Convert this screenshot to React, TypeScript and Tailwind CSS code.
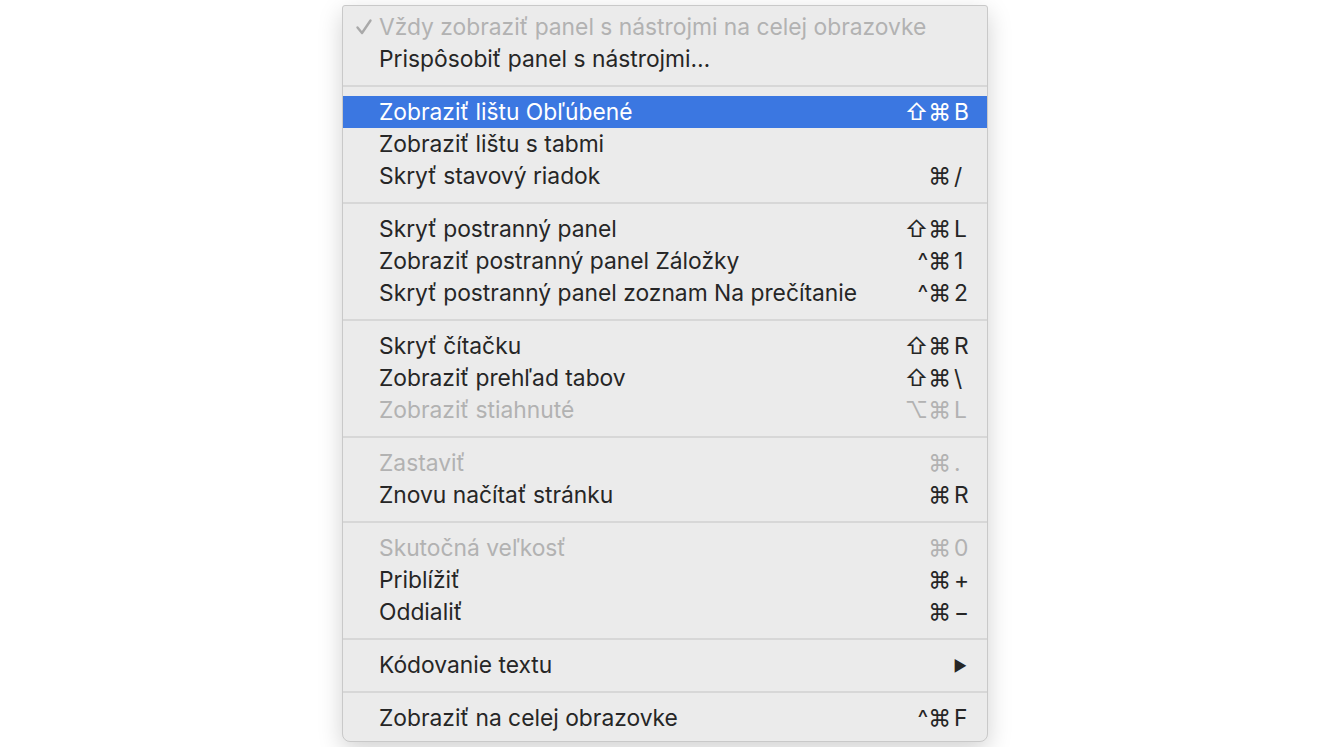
type Item = {
  label: string;
  mods?: string;
  keyChar?: string;
  disabled?: boolean;
  active?: boolean;
  checked?: boolean;
  submenu?: boolean;
};

const groups: Item[][] = [
  [
    { label: "Vždy zobraziť panel s nástrojmi na celej obrazovke", disabled: true, checked: true },
    { label: "Prispôsobiť panel s nástrojmi…" },
  ],
  [
    { label: "Zobraziť lištu Obľúbené", mods: "⇧⌘", keyChar: "B", active: true },
    { label: "Zobraziť lištu s tabmi" },
    { label: "Skryť stavový riadok", mods: "⌘", keyChar: "/" },
  ],
  [
    { label: "Skryť postranný panel", mods: "⇧⌘", keyChar: "L" },
    { label: "Zobraziť postranný panel Záložky", mods: "^⌘", keyChar: "1" },
    { label: "Skryť postranný panel zoznam Na prečítanie", mods: "^⌘", keyChar: "2" },
  ],
  [
    { label: "Skryť čítačku", mods: "⇧⌘", keyChar: "R" },
    { label: "Zobraziť prehľad tabov", mods: "⇧⌘", keyChar: "\\" },
    { label: "Zobraziť stiahnuté", mods: "⌥⌘", keyChar: "L", disabled: true },
  ],
  [
    { label: "Zastaviť", mods: "⌘", keyChar: ".", disabled: true },
    { label: "Znovu načítať stránku", mods: "⌘", keyChar: "R" },
  ],
  [
    { label: "Skutočná veľkosť", mods: "⌘", keyChar: "0", disabled: true },
    { label: "Priblížiť", mods: "⌘", keyChar: "+" },
    { label: "Oddialiť", mods: "⌘", keyChar: "−" },
  ],
  [{ label: "Kódovanie textu", submenu: true }],
  [{ label: "Zobraziť na celej obrazovke", mods: "^⌘", keyChar: "F" }],
];

function Check() {
  return (
    <svg width="18" height="18" viewBox="0 0 18 18" fill="none">
      <path
        d="M2.5 9.5 L7 15 L15.5 2.5"
        stroke="currentColor"
        strokeWidth="2.4"
        strokeLinecap="round"
        strokeLinejoin="round"
      />
    </svg>
  );
}

function Row({ item }: { item: Item }) {
  const color = item.active
    ? "bg-[#3b77e1] text-white"
    : item.disabled
      ? "text-[#b2b2b2]"
      : "text-[#262626]";
  return (
    <div className={`flex h-[32px] items-center ${color}`}>
      <div className="flex w-[36px] shrink-0 justify-end pr-[6px] text-[#a9a9a9]">
        {item.checked ? <Check /> : null}
      </div>
      <div className="flex-1 whitespace-nowrap">{item.label}</div>
      {item.submenu ? (
        <div className="flex w-[52px] justify-end pr-[20px] text-[15px]">▶</div>
      ) : (
        <div className="flex items-center pr-[16px]">
          <span className="text-right">{item.mods ?? ""}</span>
          <span className="ml-[3px] w-[17px] text-left">{item.keyChar ?? ""}</span>
        </div>
      )}
    </div>
  );
}

export default function App() {
  return (
    <div className="min-h-[747px] w-full bg-white">
      <div className="flex justify-center pt-[5px] pl-[2px]">
        <div className="w-[646px] rounded-b-[8px] rounded-t-[3px] border border-[#c9c9c9] bg-[#ebebeb] pt-[5px] pb-[7px] text-[22.8px] leading-none text-[#262626] shadow-[0_8px_24px_rgba(0,0,0,0.18)] [font-family:Inter,'Noto_Sans','DejaVu_Sans',sans-serif]">
          {groups.map((g, gi) => (
            <div key={gi}>
              {gi > 0 && (
                <div className="flex h-[21px] items-center">
                  <div className="h-[2px] w-full bg-[#d7d7d7]" />
                </div>
              )}
              {g.map((item) => (
                <Row key={item.label} item={item} />
              ))}
            </div>
          ))}
        </div>
      </div>
    </div>
  );
}
